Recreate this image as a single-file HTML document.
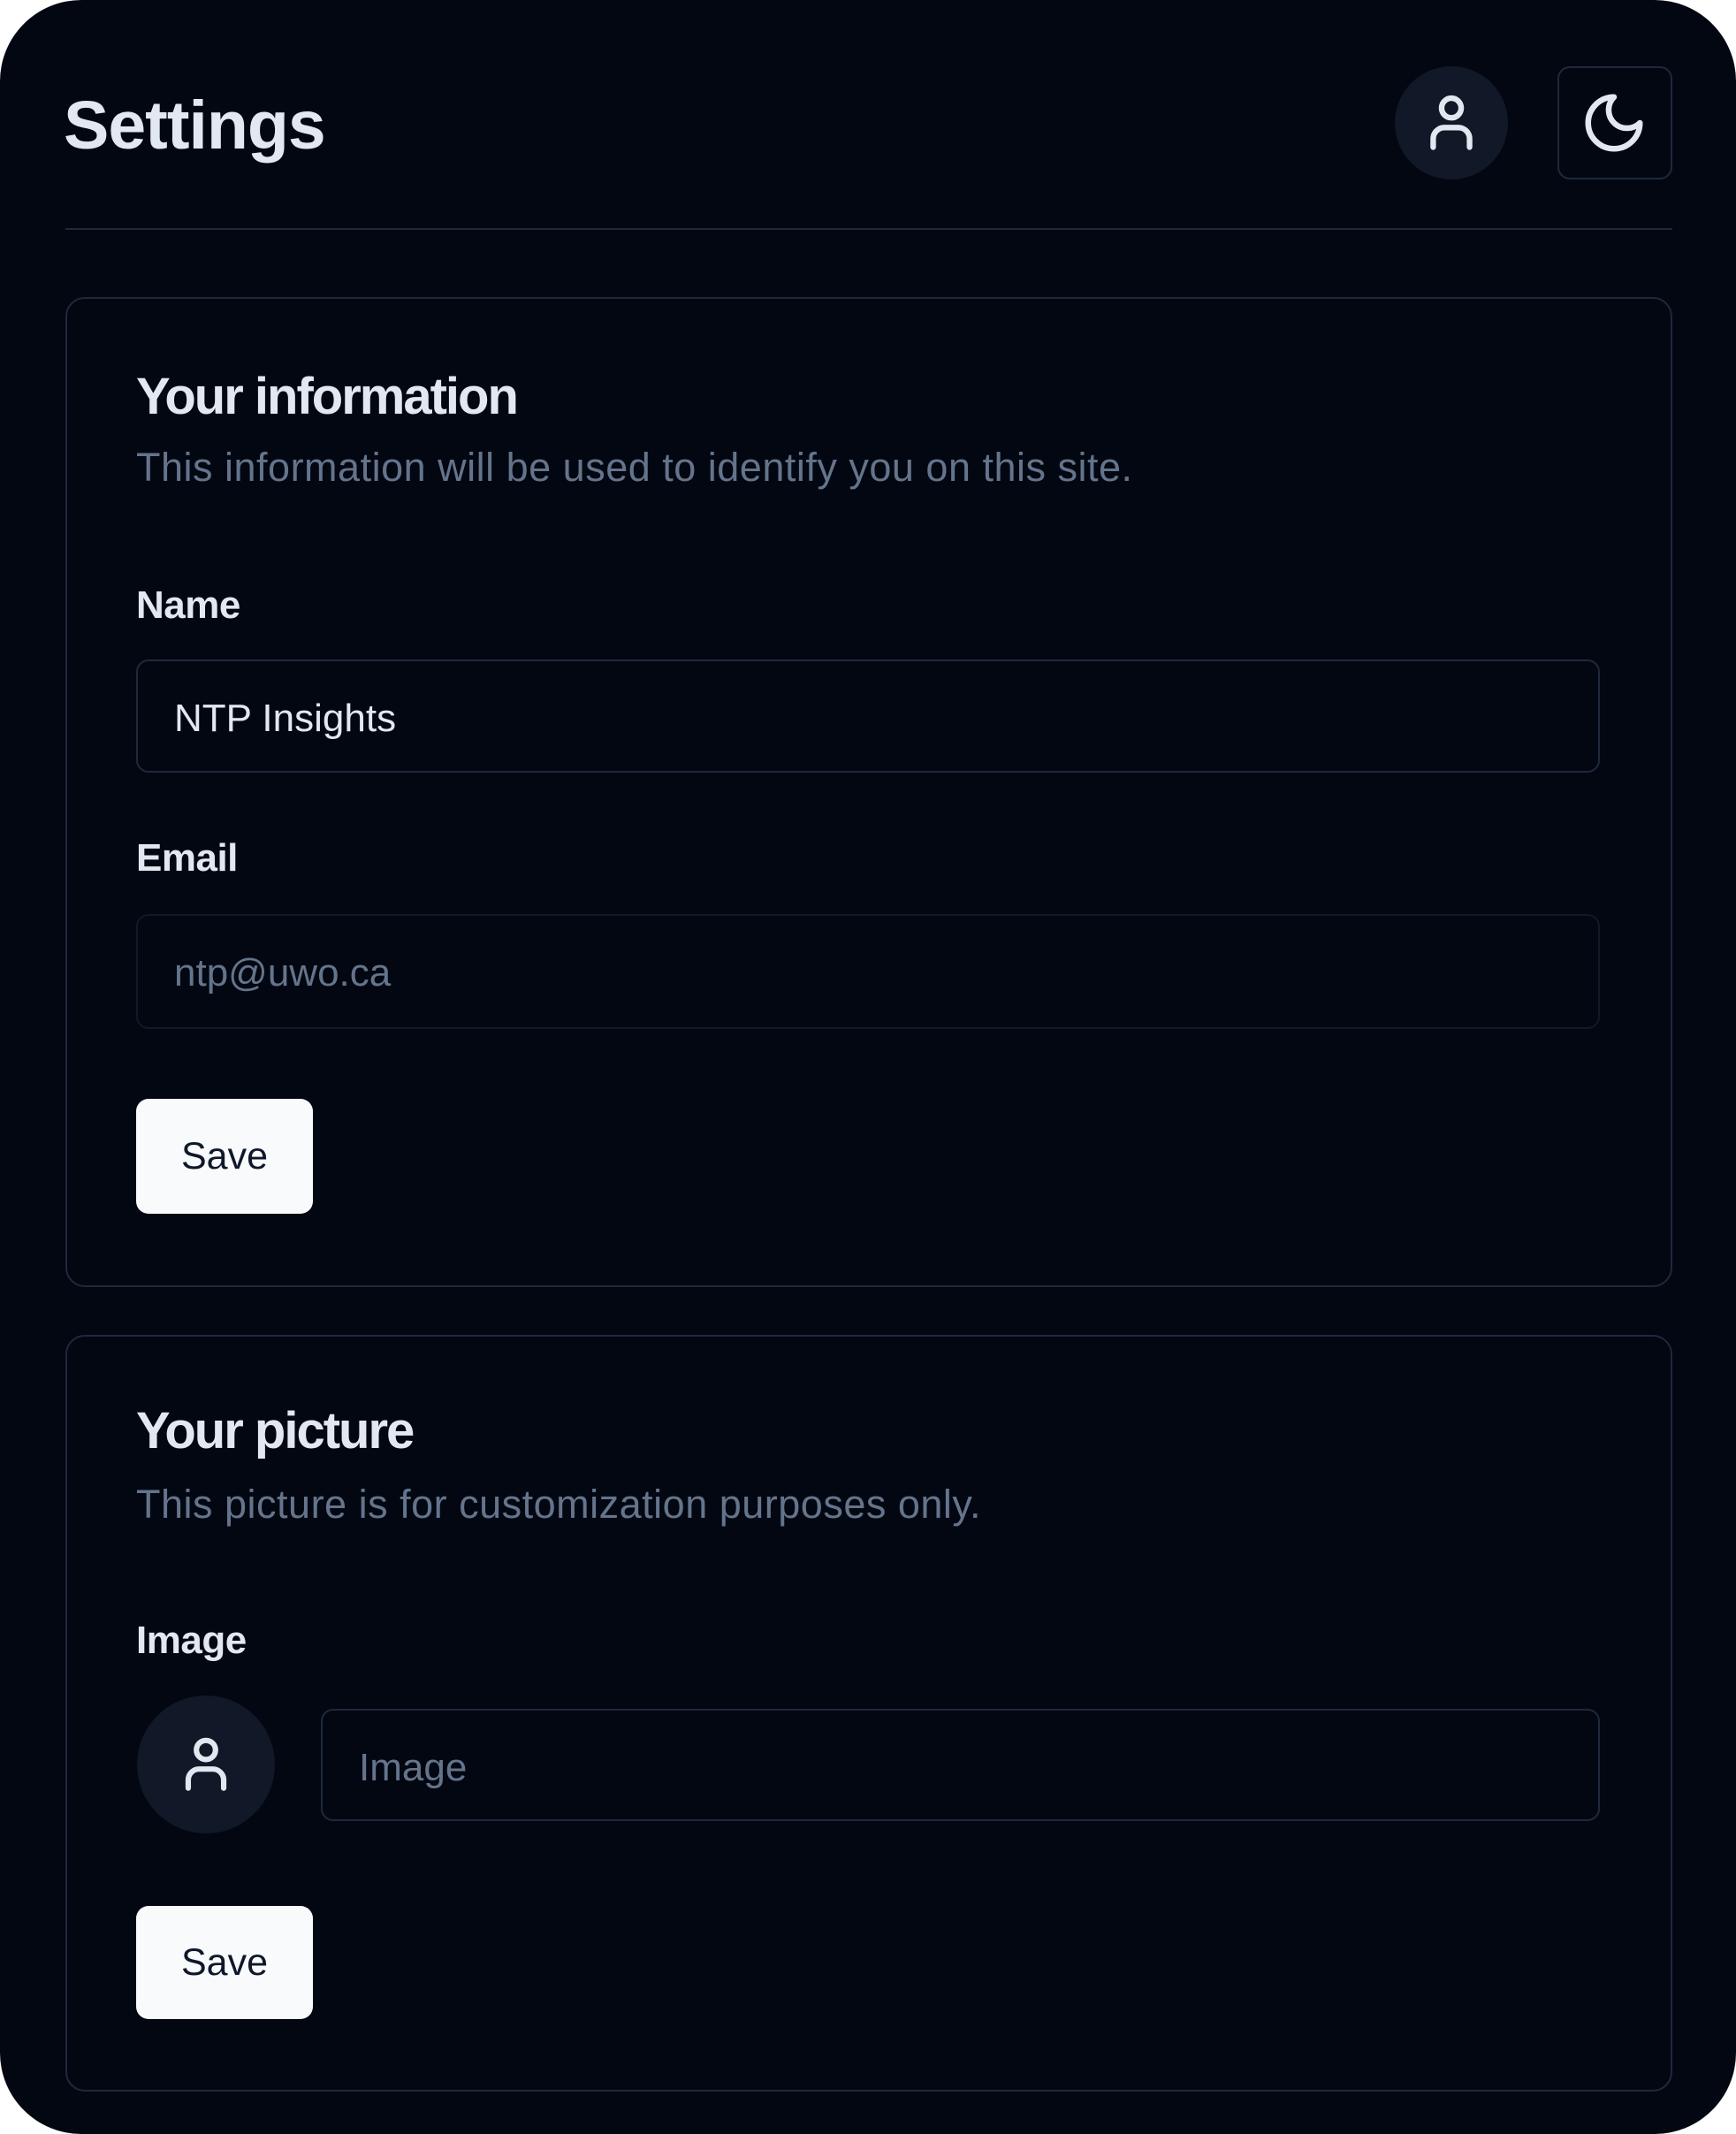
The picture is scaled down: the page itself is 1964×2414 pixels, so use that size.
<!DOCTYPE html>
<html><head><meta charset="utf-8"><style>
html,body{margin:0;padding:0;background:#fff;}
body{width:1964px;height:2414px;position:relative;overflow:hidden;font-family:"Liberation Sans",sans-serif;}
#app{position:absolute;left:0;top:0;width:1964px;height:2414px;background:#030712;border-radius:92px;}
.a{position:absolute;white-space:nowrap;}
.t{color:#e2e8f0;}
.m{color:#64748b;}
.card{position:absolute;left:74px;width:1818px;border:2px solid #1e293b;border-radius:22px;box-sizing:border-box;}
.inp{position:absolute;border:2px solid #1e293b;border-radius:14px;box-sizing:border-box;}
.btn{position:absolute;left:154px;width:200px;height:130px;background:#f8fafc;border-radius:14px;color:#0f172a;font-size:43px;text-align:center;line-height:130px;}
.lab{font-weight:bold;font-size:44px;line-height:44px;letter-spacing:-0.5px;}
.h{font-weight:bold;font-size:58px;line-height:58px;letter-spacing:-2px;}
.sub{font-size:45px;line-height:45px;letter-spacing:0.5px;}
</style></head><body>
<div id="app">
  <div class="a t" style="left:72px;top:102px;font-size:77px;line-height:80px;font-weight:bold;letter-spacing:-1px;">Settings</div>

  <div class="a" style="left:1578px;top:75px;width:128px;height:128px;border-radius:50%;background:#111827;">
    <svg width="76" height="76" viewBox="0 0 24 24" style="position:absolute;left:26px;top:25px" fill="none" stroke="#e2e8f0" stroke-width="2" stroke-linecap="round" stroke-linejoin="round"><circle cx="12" cy="7" r="3.5"/><path d="M5.5 21v-3a4 4 0 0 1 4-4h5a4 4 0 0 1 4 4v3"/></svg>
  </div>
  <div class="a" style="left:1762px;top:75px;width:130px;height:128px;border:2px solid #1e293b;border-radius:14px;box-sizing:border-box;">
    <svg width="78" height="78" viewBox="0 0 24 24" style="position:absolute;left:23px;top:23px" fill="none" stroke="#e2e8f0" stroke-width="2" stroke-linecap="round" stroke-linejoin="round"><path d="M12 3a6 6 0 0 0 9 9 9 9 0 1 1-9-9Z"/></svg>
  </div>

  <div class="a" style="left:74px;top:258px;width:1818px;height:2px;background:#1e293b;"></div>

  <div class="card" style="top:336px;height:1120px;"></div>
  <div class="a t h" style="left:154px;top:420px;">Your information</div>
  <div class="a m sub" style="left:154px;top:506px;">This information will be used to identify you on this site.</div>
  <div class="a t lab" style="left:154px;top:663px;">Name</div>
  <div class="inp" style="left:154px;top:746px;width:1656px;height:128px;"></div>
  <div class="a t" style="left:197px;top:791px;font-size:44px;line-height:44px;">NTP Insights</div>
  <div class="a t lab" style="left:154px;top:949px;">Email</div>
  <div class="inp" style="left:154px;top:1034px;width:1656px;height:130px;border-color:#111827;"></div>
  <div class="a m" style="left:197px;top:1079px;font-size:44px;line-height:44px;">ntp@uwo.ca</div>
  <div class="btn" style="top:1243px;">Save</div>

  <div class="card" style="top:1510px;height:856px;"></div>
  <div class="a t h" style="left:154px;top:1590px;">Your picture</div>
  <div class="a m sub" style="left:154px;top:1679px;">This picture is for customization purposes only.</div>
  <div class="a t lab" style="left:154px;top:1834px;">Image</div>
  <div class="a" style="left:155px;top:1918px;width:156px;height:156px;border-radius:50%;background:#111827;">
    <svg width="74" height="74" viewBox="0 0 24 24" style="position:absolute;left:41px;top:40px" fill="none" stroke="#e2e8f0" stroke-width="2" stroke-linecap="round" stroke-linejoin="round"><circle cx="12" cy="7" r="3.5"/><path d="M5.5 21v-3a4 4 0 0 1 4-4h5a4 4 0 0 1 4 4v3"/></svg>
  </div>
  <div class="inp" style="left:363px;top:1933px;width:1447px;height:127px;"></div>
  <div class="a m" style="left:406px;top:1978px;font-size:44px;line-height:44px;">Image</div>
  <div class="btn" style="top:2156px;height:128px;line-height:128px;">Save</div>
</div>
</body></html>
